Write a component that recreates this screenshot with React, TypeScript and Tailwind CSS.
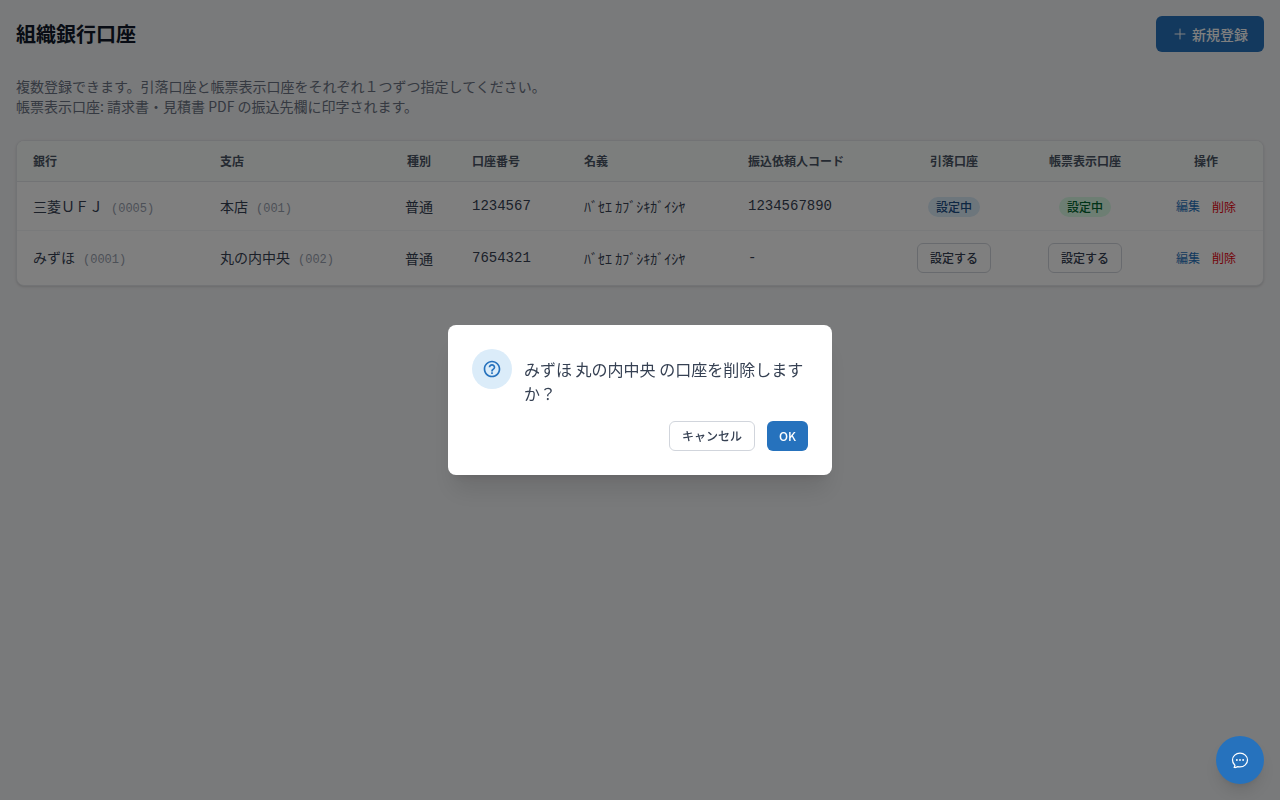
import type { ReactNode } from 'react';

import { HiOutlineChatBubbleOvalLeftEllipsis, HiOutlinePlus } from 'react-icons/hi2';
import { MdHelpOutline } from 'react-icons/md';

interface BankAccount {
  id: number;
  bank: string;
  bankCode: string;
  branch: string;
  branchCode: string;
  type: string;
  number: string;
  holder: string;
  clientCode: string | null;
  isWithdrawal: boolean;
  isInvoice: boolean;
}

const accounts: BankAccount[] = [
  {
    id: 1,
    bank: '三菱ＵＦＪ',
    bankCode: '0005',
    branch: '本店',
    branchCode: '001',
    type: '普通',
    number: '1234567',
    holder: 'ﾊﾞｾｴ ｶﾌﾞｼｷｶﾞｲｼﾔ',
    clientCode: '1234567890',
    isWithdrawal: true,
    isInvoice: true
  },
  {
    id: 2,
    bank: 'みずほ',
    bankCode: '0001',
    branch: '丸の内中央',
    branchCode: '002',
    type: '普通',
    number: '7654321',
    holder: 'ﾊﾞｾｴ ｶﾌﾞｼｷｶﾞｲｼﾔ',
    clientCode: null,
    isWithdrawal: false,
    isInvoice: false
  }
];

const columns = [
  { label: '銀行', className: 'w-[187px] text-left' },
  { label: '支店', className: 'w-[178px] text-left' },
  { label: '種別', className: 'w-[74px] text-center' },
  { label: '口座番号', className: 'w-[112px] text-left' },
  { label: '名義', className: 'w-[164px] text-left' },
  { label: '振込依頼人コード', className: 'w-[155px] text-left' },
  { label: '引落口座', className: 'w-[134px] text-center' },
  { label: '帳票表示口座', className: 'w-[128px] text-center' },
  { label: '操作', className: 'w-[114px] text-center' }
];

const mono = "font-['Liberation_Mono','Noto_Sans_CJK_JP',monospace]";

function OutlineButton({ children }: { children: ReactNode }) {
  return (
    <button className="inline-flex h-[30px] items-center rounded-md border border-gray-300 bg-white px-3 text-xs font-medium text-gray-700">
      {children}
    </button>
  );
}

function StatusCell({ active, badgeClass }: { active: boolean; badgeClass: string }) {
  return (
    <td className="px-4 text-center">
      {active ? (
        <span className={`inline-block rounded-full px-2 py-0.5 align-middle text-xs font-medium ${badgeClass}`}>設定中</span>
      ) : (
        <OutlineButton>設定する</OutlineButton>
      )}
    </td>
  );
}

function AccountTable() {
  return (
    <div className="overflow-hidden rounded-lg border border-gray-200 bg-white shadow-sm">
      <table className="w-full table-fixed text-sm text-gray-700">
        <thead className="bg-[#f9fdfa] text-xs text-gray-600">
          <tr className="border-b border-gray-200">
            {columns.map((column) => (
              <th key={column.label} className={`px-4 py-3 font-bold whitespace-nowrap ${column.className}`}>
                {column.label}
              </th>
            ))}
          </tr>
        </thead>
        <tbody className="divide-y divide-gray-100">
          {accounts.map((account) => (
            <tr key={account.id} className={account.isWithdrawal ? 'h-[49px]' : 'h-[54px]'}>
              <td className="px-4">
                {account.bank}
                <span className={`ml-2 text-xs text-gray-400 ${mono}`}>({account.bankCode})</span>
              </td>
              <td className="px-4">
                {account.branch}
                <span className={`ml-2 text-xs text-gray-400 ${mono}`}>({account.branchCode})</span>
              </td>
              <td className="text-center">{account.type}</td>
              <td className={`px-4 ${mono}`}>{account.number}</td>
              <td className="px-4 whitespace-nowrap">{account.holder}</td>
              <td className={`px-4 ${mono}`}>{account.clientCode ?? '-'}</td>
              <StatusCell active={account.isWithdrawal} badgeClass="bg-[#dbecf9] text-[#1c4f86]" />
              <StatusCell active={account.isInvoice} badgeClass="bg-green-100 text-green-800" />
              <td className="text-center">
                <div className="flex items-center justify-center gap-3 text-xs">
                  <a href="#" className="text-[#2672bd]">編集</a>
                  <button className="pt-px text-red-600">削除</button>
                </div>
              </td>
            </tr>
          ))}
        </tbody>
      </table>
    </div>
  );
}

function ConfirmDialog() {
  return (
    <div className="fixed inset-0 z-40 flex items-center justify-center bg-black/50">
      <div role="dialog" className="w-96 rounded-lg bg-white p-6 shadow-xl">
        <div className="flex items-start gap-3">
          <div className="flex size-10 flex-none items-center justify-center rounded-full bg-[#dbecf9]">
            <MdHelpOutline className="size-5 text-[#2672bd]" />
          </div>
          <p className="pt-2 text-base text-gray-700">みずほ 丸の内中央 の口座を削除しますか？</p>
        </div>
        <div className="mt-4 flex justify-end gap-3">
          <OutlineButton>キャンセル</OutlineButton>
          <button className="h-[30px] rounded-md bg-[#2672bd] px-3 text-xs font-medium text-white">OK</button>
        </div>
      </div>
    </div>
  );
}

export default function App() {
  return (
    <div className="min-h-screen bg-gray-100 p-4 font-['Noto_Sans_CJK_JP',sans-serif]">
      <header className="flex h-9 items-center justify-between">
        <h1 className="text-xl font-bold text-gray-900">組織銀行口座</h1>
        <button className="flex h-9 items-center gap-1 rounded-md bg-[#2672bd] px-4 text-sm font-medium text-white">
          <HiOutlinePlus className="size-4" />
          新規登録
        </button>
      </header>

      <p className="mt-6 mb-6 text-sm text-gray-500">
        複数登録できます。引落口座と帳票表示口座をそれぞれ１つずつ指定してください。
        <br />
        帳票表示口座: 請求書・見積書 PDF の振込先欄に印字されます。
      </p>

      <AccountTable />
      <ConfirmDialog />

      <button
        aria-label="チャット"
        className="fixed right-4 bottom-4 z-50 flex size-12 items-center justify-center rounded-full bg-[#2672bd] text-white shadow-lg"
      >
        <HiOutlineChatBubbleOvalLeftEllipsis className="size-5" />
      </button>
    </div>
  );
}
